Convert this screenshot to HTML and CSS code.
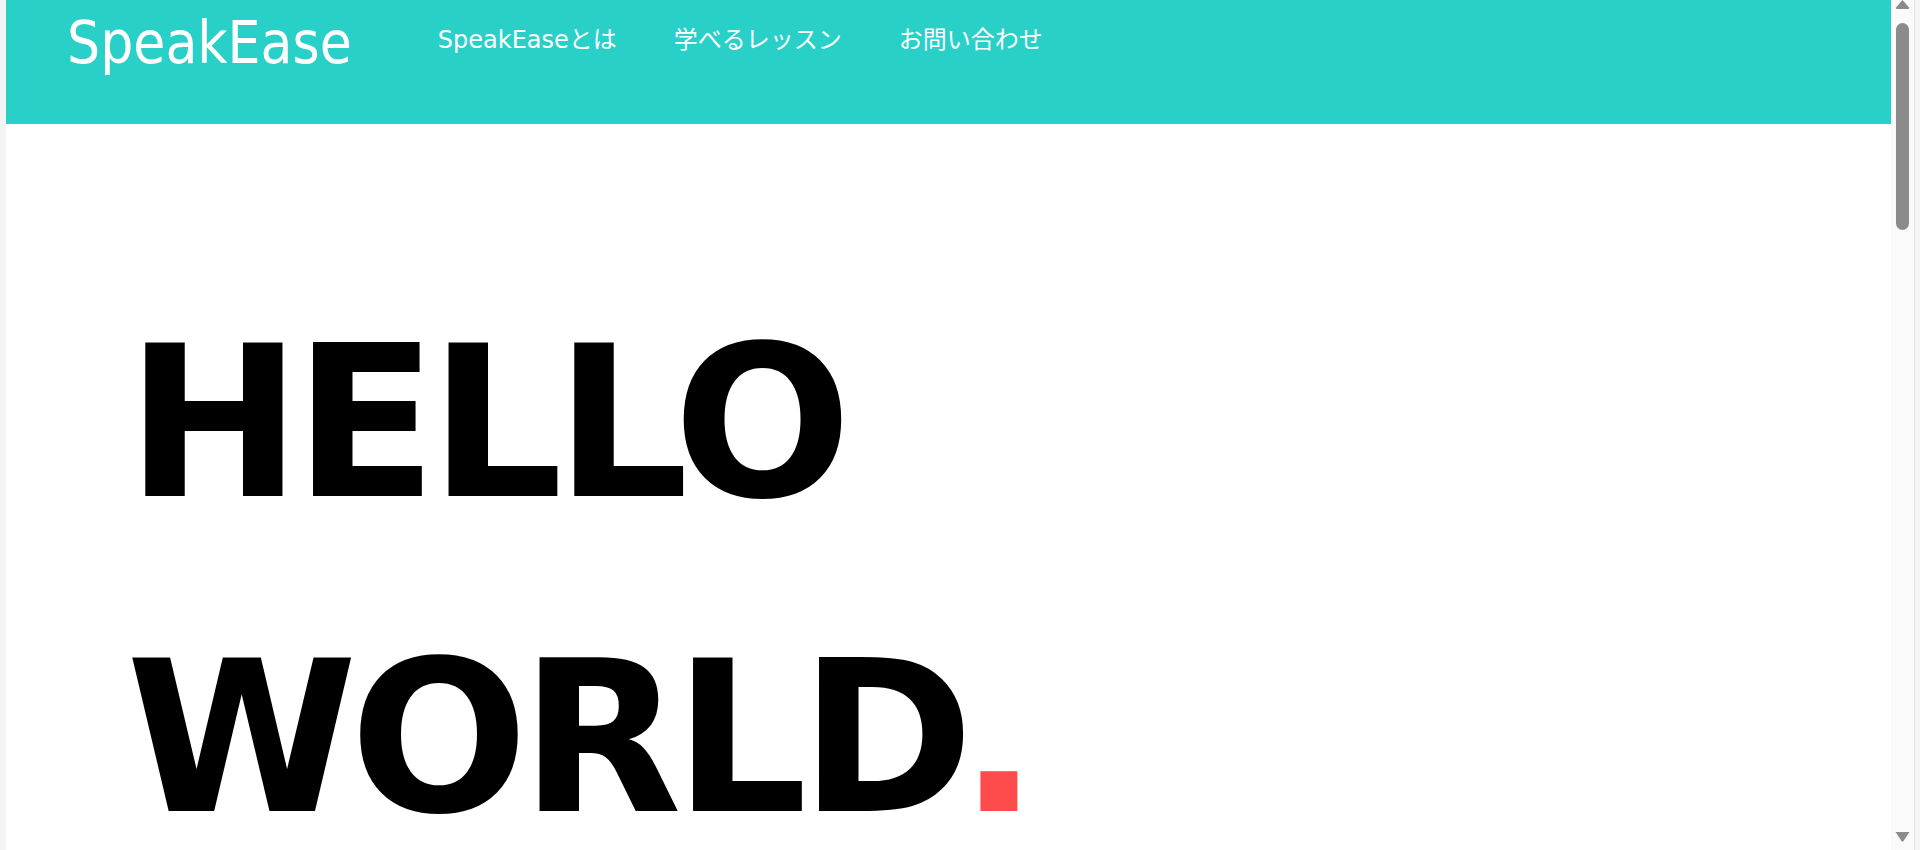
FILE: index.html
```html
<!DOCTYPE html>
<html lang="ja">
<head>
<meta charset="utf-8">
<title>SpeakEase</title>
<link rel="stylesheet" href="styles.css">
</head>
<body>
<div class="page">
  <header class="site-header">
    <div class="logo">SpeakEase</div>
    <nav class="nav">
      <a class="nav-item" href="#">SpeakEaseとは</a>
      <a class="nav-item" href="#">学べるレッスン</a>
      <a class="nav-item" href="#">お問い合わせ</a>
    </nav>
  </header>
  <main class="hero">
    <h1 class="hero-title">HELLO<br>WORLD<span class="dot">.</span></h1>
  </main>
</div>
<div class="scrollbar">
  <svg class="arrow arrow-up" width="15" height="9" viewBox="0 0 15 9"><path d="M7.5 0 L14 7.5 Q14.5 9 13 9 L2 9 Q0.5 9 1 7.5 Z" fill="#8b8b8b"/></svg>
  <div class="thumb"></div>
  <div class="track-space"></div>
  <svg class="arrow arrow-down" width="15" height="10" viewBox="0 0 15 10"><path d="M0.5 0 L14.5 0 L8.5 9 Q7.5 10.5 6.5 9 Z" fill="#8b8b8b"/></svg>
</div>
<div class="frame-right"></div>
</body>
</html>
```
FILE: styles.css
```css
html, body {
  margin: 0;
  padding: 0;
  height: 850px;
  overflow: hidden;
}
body {
  display: flex;
  background: #f4f4f4;
  padding-left: 6px;
  box-sizing: border-box;
}
.page {
  flex: 1;
  background: #ffffff;
  overflow: hidden;
}
.site-header {
  height: 124px;
  background: #29d0c8;
  display: flex;
  align-items: flex-start;
  padding: 9px 0 0 61px;
  box-sizing: border-box;
  color: #ffffff;
  font-family: "DejaVu Sans", "Noto Sans CJK JP", sans-serif;
}
.logo {
  font-family: "DejaVu Sans Condensed", "DejaVu Sans", sans-serif;
  font-stretch: condensed;
  font-size: 58px;
  line-height: normal;
}
.nav {
  display: flex;
  gap: 57px;
  margin: 16px 0 0 86px;
}
.nav-item {
  color: #ffffff;
  text-decoration: none;
  font-size: 24px;
  line-height: 30px;
}
.hero {
  padding: 142px 0 0 120px;
}
.hero-title {
  margin: 0;
  font-family: "DejaVu Sans", sans-serif;
  font-weight: bold;
  font-size: 210px;
  line-height: 1.5;
  letter-spacing: -8px;
  color: #000000;
}
.dot {
  color: #ff4b4b;
  margin-left: -7px;
}
.scrollbar {
  width: 23px;
  background: #fafafa;
  border-right: 1px solid #e2e2e2;
  display: flex;
  flex-direction: column;
  align-items: center;
}
.arrow-up {
  margin-top: 0;
}
.thumb {
  width: 13px;
  height: 207px;
  margin-top: 14px;
  border-radius: 7px;
  background: #8b8b8b;
}
.track-space {
  flex: 1;
}
.arrow-down {
  margin-bottom: 8px;
}
.frame-right {
  width: 5px;
  background: #f4f4f4;
}
```
